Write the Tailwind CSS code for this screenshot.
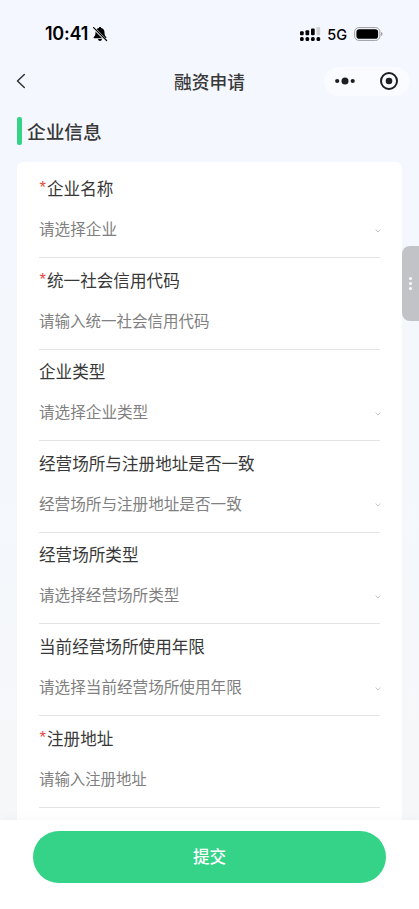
<!DOCTYPE html>
<html lang="zh-CN">
<head>
<meta charset="utf-8">
<meta name="viewport" content="width=device-width, initial-scale=1">
<title>融资申请</title>
<script src="https://cdn.jsdelivr.net/npm/@tailwindcss/browser@4"></script>
</head>
<body class="w-[419px] h-[909px] overflow-hidden font-['Noto_Sans_CJK_SC',sans-serif] text-[#383838]">
<div class="relative flex flex-col h-[909px] bg-linear-to-b from-[#f4f7ff] from-0% via-[#f4f8fc] via-50% to-[#f6f7f9] to-90% overflow-hidden">
  <!-- Status bar -->
  <div class="h-[56px] shrink-0 flex items-center justify-between pl-[45px] pr-[36px] pt-[12px] text-black font-['Inter',sans-serif]">
    <div class="flex items-center gap-[4px]">
      <span class="text-[18px] leading-6 font-semibold tracking-[-0.25px]">10:41</span>
      <svg class="w-[16px] h-[16px]" viewBox="0 0 16 16"><path d="M8 1c-.7 0-1.200.5-1.200 1.100C4.700 2.600 3.500 4.300 3.500 6.500c0 2.600-.8 3.600-1.700 4.500-.5.5-.2 1.200.4 1.200h11.600c.6 0 .9-.7.4-1.200-.9-.9-1.700-1.900-1.700-4.500 0-2.200-1.200-3.900-3.300-4.400C9.200 1.500 8.700 1 8 1zM6 13h4c-.2 1.200-1 1.900-2 1.900S6.200 14.200 6 13z"/><path d="M1.300 1.600 14.600 14.800" stroke="#f4f8ff" stroke-width="2.600"/><path d="M1.600 1.600 14.600 14.500" stroke="#000" stroke-width="1.200" stroke-linecap="round"/></svg>
    </div>
    <div class="flex items-center">
      <svg class="w-[22px] h-[16px] mr-[6px]" viewBox="0 0 22 16"><g fill="#000"><rect x="1" y="5.200" width="3.700" height="4" rx="1"/><rect x="6.500" y="4.200" width="3.700" height="5" rx="1"/><rect x="12" y="2.500" width="3.700" height="6.700" rx="1"/><rect x="1" y="11" width="3.700" height="4" rx="1.500"/><rect x="6.500" y="11" width="3.700" height="4" rx="1.500"/><rect x="12" y="11" width="3.700" height="4" rx="1.500"/><rect x="17.500" y="11" width="3.700" height="4" rx="1.500"/></g><rect x="17.500" y="1" width="3.700" height="8.200" rx="1" fill="#cfd1d5"/></svg>
      <span class="text-[14.500px] leading-6 font-medium mr-[7px] relative top-[1px]">5G</span>
      <svg class="w-[29px] h-[14px]" viewBox="0 0 29 14"><rect x=".6" y=".6" width="25.300" height="12.800" rx="4.200" fill="#f4f7fc" stroke="#9b9da1"/><rect x="2.400" y="2.300" width="21.700" height="9.400" rx="2.800"/><path d="M27.200 5v4c.9-.4 1.200-1.100 1.200-2s-.3-1.600-1.200-2z" fill="#8f9195"/></svg>
    </div>
  </div>
  <!-- Navigation bar -->
  <div class="h-[50px] shrink-0 grid grid-cols-[1fr_auto_1fr] items-center pl-[15px] pr-[9px]">
    <svg class="w-[12px] h-[16px]" viewBox="0 0 12 16" fill="none" stroke="#333" stroke-width="1.500" stroke-linecap="round" stroke-linejoin="round"><path d="M9.300 1.500 2.500 8l6.800 6.500"/></svg>
    <h1 class="text-[17.700px] leading-6 font-medium translate-x-[-3px]">融资申请</h1>
    <div class="justify-self-end w-[86px] h-[29px] rounded-full bg-[#f9fbfe] flex items-center justify-between pl-[11px] pr-[11px]">
      <svg class="w-[20px] h-[8px]" viewBox="0 0 20 8" fill="#1d1e20"><circle cx="2.200" cy="4" r="2.100"/><circle cx="10" cy="4" r="3.500"/><circle cx="17.700" cy="4" r="2.100"/></svg>
      <svg class="w-[20px] h-[20px]" viewBox="0 0 20 20"><circle cx="10" cy="10" r="8" fill="none" stroke="#1d1e20" stroke-width="2"/><circle cx="10" cy="10" r="3.300" fill="#1d1e20"/></svg>
    </div>
  </div>
  <!-- Section heading -->
  <div class="h-[56px] shrink-0 flex items-start pl-[17px] pt-[10.500px]">
    <span class="w-[5px] h-[28px] rounded-[2px] bg-[#35d388]"></span>
    <h2 class="ml-[5px] text-[18.700px] leading-[27px] font-medium">企业信息</h2>
  </div>
  <!-- Form card -->
  <div class="flex-1 min-h-0 mx-[17px] bg-white rounded-t-[6px] overflow-hidden px-[22px] pt-[4.500px]">
    <div class="h-[91.600px] border-b border-[#e4e4e4] pt-[9.600px]">
      <div class="flex text-[16.600px] leading-6"><span class="text-[#e5483f] font-['Liberation_Sans'] w-[8px] pl-[0.500px]">*</span>企业名称</div>
      <div class="mt-[16px] flex items-center justify-between text-[15.600px] leading-6 text-[#808080]">请选择企业<svg class="w-[6px] h-[6px] mr-[-1px] mt-[5px]" viewBox="0 0 6 6" fill="none" stroke="#c4c4c4"><path d="M.7 1.500 3 4l2.300-2.500"/></svg></div>
    </div>
    <div class="h-[91.600px] border-b border-[#e4e4e4] pt-[9.600px]">
      <div class="flex text-[16.600px] leading-6"><span class="text-[#e5483f] font-['Liberation_Sans'] w-[8px] pl-[0.500px]">*</span>统一社会信用代码</div>
      <div class="mt-[16px] text-[15.500px] leading-6 text-[#808080]">请输入统一社会信用代码</div>
    </div>
    <div class="h-[91.600px] border-b border-[#e4e4e4] pt-[9.600px]">
      <div class="text-[16.600px] leading-6">企业类型</div>
      <div class="mt-[16px] flex items-center justify-between text-[15.600px] leading-6 text-[#808080]">请选择企业类型<svg class="w-[6px] h-[6px] mr-[-1px] mt-[5px]" viewBox="0 0 6 6" fill="none" stroke="#c4c4c4"><path d="M.7 1.500 3 4l2.300-2.500"/></svg></div>
    </div>
    <div class="h-[91.600px] border-b border-[#e4e4e4] pt-[9.600px]">
      <div class="text-[16.600px] leading-6">经营场所与注册地址是否一致</div>
      <div class="mt-[16px] flex items-center justify-between text-[15.600px] leading-6 text-[#808080]">经营场所与注册地址是否一致<svg class="w-[6px] h-[6px] mr-[-1px] mt-[5px]" viewBox="0 0 6 6" fill="none" stroke="#c4c4c4"><path d="M.7 1.500 3 4l2.300-2.500"/></svg></div>
    </div>
    <div class="h-[91.600px] border-b border-[#e4e4e4] pt-[9.600px]">
      <div class="text-[16.600px] leading-6">经营场所类型</div>
      <div class="mt-[16px] flex items-center justify-between text-[15.600px] leading-6 text-[#808080]">请选择经营场所类型<svg class="w-[6px] h-[6px] mr-[-1px] mt-[5px]" viewBox="0 0 6 6" fill="none" stroke="#c4c4c4"><path d="M.7 1.500 3 4l2.300-2.500"/></svg></div>
    </div>
    <div class="h-[91.600px] border-b border-[#e4e4e4] pt-[9.600px]">
      <div class="text-[16.600px] leading-6">当前经营场所使用年限</div>
      <div class="mt-[16px] flex items-center justify-between text-[15.600px] leading-6 text-[#808080]">请选择当前经营场所使用年限<svg class="w-[6px] h-[6px] mr-[-1px] mt-[5px]" viewBox="0 0 6 6" fill="none" stroke="#c4c4c4"><path d="M.7 1.500 3 4l2.300-2.500"/></svg></div>
    </div>
    <div class="h-[91.600px] border-b border-[#e4e4e4] pt-[9.600px]">
      <div class="flex text-[16.600px] leading-6"><span class="text-[#e5483f] font-['Liberation_Sans'] w-[8px] pl-[0.500px]">*</span>注册地址</div>
      <div class="mt-[16px] text-[15.400px] leading-6 text-[#808080]">请输入注册地址</div>
    </div>
  </div>
  <!-- Submit bar -->
  <div class="h-[89px] shrink-0 bg-white px-[33px] pt-[11px] shadow-[0_0_12px_rgba(0,0,0,0.04)]">
    <button class="w-full h-[52px] rounded-full bg-[#35d388] text-white text-[16.600px] leading-[50px] font-medium flex justify-center">提交</button>
  </div>
  <!-- Edge drawer handle -->
  <div class="absolute left-[402px] top-[246px] w-[24px] h-[75px] rounded-[8px] bg-[#c2c3c6] flex flex-col items-start justify-center gap-[2px] pl-[7px]">
    <i class="size-[3px] rounded-full bg-white"></i><i class="size-[3px] rounded-full bg-white"></i><i class="size-[3px] rounded-full bg-white"></i>
  </div>
</div>
</body>
</html>
